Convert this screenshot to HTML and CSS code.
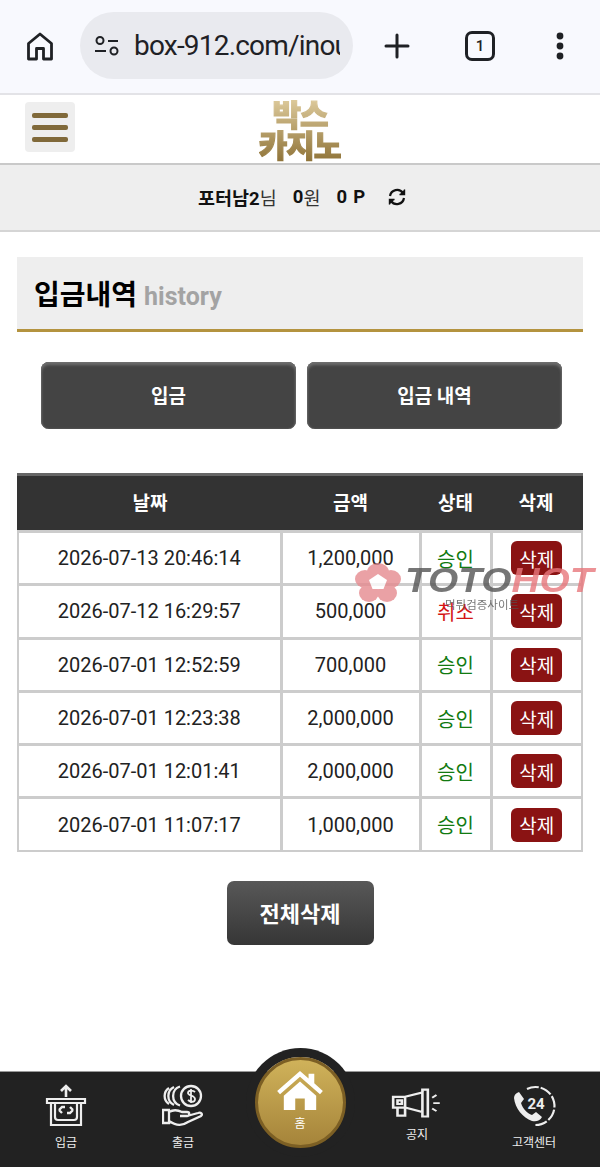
FILE: index.html
```html
<!DOCTYPE html>
<html lang="ko">
<head>
  <meta charset="UTF-8">
  <meta name="viewport" content="width=device-width, initial-scale=1.0">
  <title>입금내역</title>
  <link rel="stylesheet" href="styles.css">
</head>
<body>
  <div class="browser-bar">
    <svg class="home-icon" width="32" height="32" viewBox="0 0 32 32" fill="none" stroke="#1f2125" stroke-width="2.800" stroke-linejoin="round">
      <path d="M4.500 29V13.500L16 4l11.500 9.500V29h-8V18.500h-7V29z"/>
    </svg>
    <div class="url-pill">
      <svg width="26" height="22" viewBox="0 0 26 22" fill="none" stroke="#1f2125" stroke-width="2">
        <circle cx="6" cy="5.500" r="3.500"/><path d="M14 6h10M1 16h11"/><circle cx="20" cy="16" r="3.500"/>
      </svg>
      <span class="url-text">box-912.com/inout</span>
    </div>
    <svg class="plus-icon" width="28" height="28" viewBox="0 0 28 28" stroke="#1f2125" stroke-width="3" stroke-linecap="round"><path d="M14 3v22M3 14h22"/></svg>
    <div class="tab-count">1</div>
    <svg class="more-icon" width="10" height="28" viewBox="0 0 10 28" fill="#1f2125"><circle cx="5" cy="4" r="3.400"/><circle cx="5" cy="14" r="3.400"/><circle cx="5" cy="24" r="3.400"/></svg>
  </div>

  <header class="site-header">
    <button class="menu-btn"><span></span><span></span><span></span></button>
    <div class="logo">박스<br>카지노</div>
  </header>

  <div class="user-bar">
    <b>포터남2</b><span>님</span>
    <b class="gap">0</b><span>원</span>
    <b class="gap points">0 P</b>
    <svg class="refresh" width="20" height="20" viewBox="0 0 20 20" fill="none" stroke="#111" stroke-width="2.200">
      <path d="M3 9A7.200 7.200 0 0 1 16 6M17 11A7.200 7.200 0 0 1 4 14"/>
      <path d="M17.500 2.500v5h-5M2.500 17.500v-5h5" stroke-width="1.400" fill="#111"/>
    </svg>
  </div>

  <main class="content">
    <div class="title-box"><h1>입금내역</h1><span>history</span></div>

    <div class="tabs">
      <a class="tab">입금</a>
      <a class="tab">입금 내역</a>
    </div>

    <table class="history">
      <thead>
        <tr><th>날짜</th><th>금액</th><th>상태</th><th>삭제</th></tr>
      </thead>
      <tbody>
        <tr><td>2026-07-13 20:46:14</td><td>1,200,000</td><td class="ok">승인</td><td><a class="del">삭제</a></td></tr>
        <tr><td>2026-07-12 16:29:57</td><td>500,000</td><td class="no">취소</td><td><a class="del">삭제</a></td></tr>
        <tr><td>2026-07-01 12:52:59</td><td>700,000</td><td class="ok">승인</td><td><a class="del">삭제</a></td></tr>
        <tr><td>2026-07-01 12:23:38</td><td>2,000,000</td><td class="ok">승인</td><td><a class="del">삭제</a></td></tr>
        <tr><td>2026-07-01 12:01:41</td><td>2,000,000</td><td class="ok">승인</td><td><a class="del">삭제</a></td></tr>
        <tr><td>2026-07-01 11:07:17</td><td>1,000,000</td><td class="ok">승인</td><td><a class="del">삭제</a></td></tr>
      </tbody>
    </table>

    <div class="delete-row"><a class="delete-all">전체삭제</a></div>
  </main>

  <!-- watermark sits over the table -->
  <div class="watermark">
    <svg class="wm-icon" width="48" height="40" viewBox="0 0 46 40">
      <g fill="#e58a8f">
        <ellipse cx="23" cy="9" rx="11" ry="9"/><ellipse cx="36" cy="16" rx="10" ry="9"/><ellipse cx="32" cy="30" rx="10" ry="9"/><ellipse cx="14" cy="30" rx="10" ry="9"/><ellipse cx="10" cy="16" rx="10" ry="9"/>
      </g>
      <path d="M23 11l9 6-3.500 9h-11L14 17z" fill="#fff"/>
    </svg>
    <div class="wm-word"><i>TOTO</i><i class="wm-hot">HOT</i></div>
    <div class="wm-sub">먹튀검증사이트</div>
  </div>

  <nav class="bottom-nav">
    <a class="nav-item">
      <svg width="42" height="44" viewBox="0 0 42 44" fill="none" stroke="#eee" stroke-width="2.200">
        <path d="M21 2v11M16 7l5-5 5 5" stroke-width="2.600"/>
        <path d="M2 15h38v4H2zM6 19v22h30V19"/>
        <path d="M10 19v14c0 2 1 3 3 3h16c2 0 3-1 3-3V19"/>
        <path d="M14 26l3-3h3M28 26l-3 3h-3M14 26l3 3M28 26l-3-3" stroke-width="2.400"/>
      </svg>
      <span>입금</span>
    </a>
    <a class="nav-item">
      <svg width="42" height="44" viewBox="0 0 42 44" fill="none" stroke="#eee" stroke-width="2.300">
        <circle cx="29" cy="12" r="10"/>
        <path d="M18 2.500a10 10 0 0 0 0 19M12 3a10 10 0 0 0 0 18M7 4a9.500 9.500 0 0 0 0 16"/>
        <path d="M33 8c-2-2-7-2-7 1s7 2 7 6-5 3-7 1M29 5v14" stroke-width="1.800"/>
        <path d="M1 26h6v13H1zM7 28c5-3 9-2 13 0h5c3 0 3 4 0 4h-7M7 37c8 5 13 5 19 1l13-6c2-2 0-4-3-3l-11 3"/>
      </svg>
      <span>출금</span>
    </a>
    <a class="nav-home">
      <svg width="48" height="40" viewBox="0 0 50 42" fill="#fff">
        <path d="M25 1L1 22l3 3.500L25 7l21 18.500 3-3.500-9-8V4h-6v5z"/>
        <path d="M8 27L25 12l17 15v15H30V30H20v12H8z"/>
      </svg>
      <span>홈</span>
    </a>
    <a class="nav-item nav-up">
      <svg width="52" height="34" viewBox="0 0 48 38" preserveAspectRatio="none" fill="none" stroke="#eee" stroke-width="2.400">
        <path d="M2 11h11v12H2zM13 11l16-5v22l-16-5M29 3h5v30h-5z"/>
        <path d="M6 23v9h7v-9M6 15h4v4H6z"/>
        <path d="M38 12l4-3M39 18h6M38 24l4 3" stroke-width="2"/>
      </svg>
      <span>공지</span>
    </a>
    <a class="nav-item">
      <svg width="46" height="44" viewBox="0 0 46 44" fill="none" stroke="#eee" stroke-width="2.200">
        <path d="M16 5a19 19 0 1 1 8 36" stroke-dasharray="12 2"/>
        <path d="M8 8l5 7-3 4c2 6 6 10 11 12l4-3 6 5c-2 4-6 5-10 4C12 34 4 24 3 14c0-3 2-5 5-6z" fill="#eee" stroke="none"/>
        <text x="25" y="25" class="nav-24">24</text>
      </svg>
      <span>고객센터</span>
    </a>
  </nav>
</body>
</html>
```

FILE: styles.css
```css
* {
  box-sizing: border-box;
}

body {
  margin: 0;
  height: 1167px;
  overflow: hidden;
  position: relative;
  background-color: #fff;
  color: #111;
  font-family: Roboto, "Noto Sans CJK KR", sans-serif;
}

/* browser chrome */
.browser-bar {
  height: 95px;
  display: flex;
  align-items: center;
  background-color: #f8f9fe;
  border-bottom: 2px solid #e3e3e7;
  padding: 0 0 2px 24px;
}

.url-pill {
  width: 273px;
  height: 67px;
  margin-left: 24px;
  padding: 0 13px 0 14px;
  display: flex;
  align-items: center;
  gap: 14px;
  background-color: #e9eaef;
  border-radius: 34px;
  flex-shrink: 0;
}

.url-pill svg {
  flex-shrink: 0;
}

.url-text {
  font-size: 28px;
  letter-spacing: -0.8px;
  color: #1f2125;
  white-space: nowrap;
  overflow: hidden;
}

.plus-icon {
  margin-left: 30px;
}

.tab-count {
  width: 30px;
  height: 30px;
  margin-left: 54px;
  border: 3px solid #1f2125;
  border-radius: 7px;
  font-size: 15px;
  font-weight: 500;
  display: flex;
  justify-content: center;
  align-items: center;
  color: #1f2125;
}

.more-icon {
  margin-left: 60px;
}

/* site header */
.site-header {
  height: 70px;
  position: relative;
  display: flex;
  align-items: center;
  justify-content: center;
  border-bottom: 2px solid #c9c9c9;
  padding-top: 3px;
}

.menu-btn {
  position: absolute;
  left: 25px;
  top: 7px;
  width: 50px;
  height: 50px;
  padding: 0 7px;
  border: none;
  border-radius: 4px;
  background-color: #eee;
  display: flex;
  flex-direction: column;
  justify-content: center;
  gap: 7px;
}

.menu-btn span {
  height: 5px;
  border-radius: 2px;
  background-color: #80693a;
}

.logo {
  font-size: 31px;
  line-height: 31px;
  font-weight: 900;
  letter-spacing: -1px;
  text-align: center;
  background: linear-gradient(#dcc99a, #8f7338);
  -webkit-background-clip: text;
  background-clip: text;
  color: transparent;
  -webkit-text-stroke: 1.200px transparent;
  filter: blur(0.4px);
}

.user-bar {
  height: 67px;
  background-color: #eee;
  border-bottom: 2px solid #d5d5d5;
  display: flex;
  align-items: center;
  justify-content: center;
  font-size: 18.500px;
  padding: 0 0 1px 5px;
}

.user-bar span {
  font-weight: 400;
  color: #333;
}

.user-bar .gap {
  margin-left: 16px;
}

.user-bar .points {
  letter-spacing: 0.8px;
}

.refresh {
  margin-left: 21px;
}

/* content */
.content {
  padding: 25px 17px 0;
}

.title-box {
  height: 75px;
  background-color: #eee;
  border-bottom: 3px solid #b4933f;
  display: flex;
  align-items: center;
  padding-left: 17px;
  gap: 7px;
}

.title-box h1 {
  margin: 0;
  font-size: 28px;
  font-weight: 700;
  color: #000;
}

.title-box span {
  font-size: 25px;
  font-weight: 700;
  color: #a3a3a3;
  margin-top: 6px;
}

.tabs {
  display: flex;
  gap: 11px;
  padding: 30px 21px 0 24px;
}

.tab {
  flex: 1;
  height: 67px;
  padding-bottom: 3px;
  display: flex;
  align-items: center;
  justify-content: center;
  border-radius: 8px;
  background-color: #444;
  box-shadow: inset 0 3px 3px #6e6e6e, inset 1px 0 2px #5c5c5c, inset -1px 0 2px #5c5c5c;
  color: #fff;
  font-size: 19px;
  font-weight: 700;
}

.history {
  width: 100%;
  margin-top: 44px;
  border-collapse: collapse;
  table-layout: fixed;
}

.history th {
  height: 57px;
  padding: 0 0 3px;
  background-color: #333;
  border-top: 3px solid #666;
  border-bottom: 2px solid #111;
  color: #fff;
  font-size: 19px;
  font-weight: 700;
}

.history th:first-child {
  border-left: 2px solid #333;
}

.history th:last-child {
  border-right: 2px solid #333;
}

.history td {
  height: 53.300px;
  padding: 0;
  border: 3px solid #ccc;
  text-align: center;
  font-size: 20px;
  color: #222;
}

.history tr:last-child td {
  border-bottom-width: 2px;
}

.history td:first-child {
  border-left-width: 2px;
}

.history td:last-child {
  border-right-width: 2px;
}

.history th:nth-child(1) { width: 263px; }
.history th:nth-child(2) { width: 139px; }
.history th:nth-child(3) { width: 71px; }

.history td.ok {
  color: #117a11;
}

.history td.no {
  color: #d41515;
}

.del {
  display: inline-flex;
  align-items: center;
  justify-content: center;
  width: 51px;
  height: 34px;
  border-radius: 6px;
  background-color: #8a1313;
  color: #fff;
  font-size: 19px;
  vertical-align: middle;
}

.delete-row {
  display: flex;
  justify-content: center;
  margin-top: 29px;
}

.delete-all {
  width: 147px;
  height: 64px;
  padding-bottom: 3px;
  display: flex;
  align-items: center;
  justify-content: center;
  border-radius: 7px;
  background: linear-gradient(#585858, #363636);
  color: #fff;
  font-size: 22px;
  font-weight: 700;
}

/* watermark */
.watermark {
  position: absolute;
  left: 354px;
  top: 557px;
  width: 246px;
  height: 60px;
  pointer-events: none;
  display: flex;
  gap: 3px;
  opacity: 0.8;
}

.wm-icon {
  margin-top: 6px;
  flex-shrink: 0;
}

.wm-word {
  font-family: "Liberation Sans", sans-serif;
  font-size: 35px;
  font-weight: 700;
  line-height: 46px;
  color: #555;
  white-space: nowrap;
  transform: scaleX(1.11);
  transform-origin: left center;
}

.wm-word i {
  font-style: italic;
}

.wm-word .wm-hot {
  color: #e8777c;
}

.wm-sub {
  position: absolute;
  left: 91px;
  top: 39px;
  font-size: 11.500px;
  color: #555;
  white-space: nowrap;
}

/* bottom nav */
.bottom-nav {
  position: absolute;
  left: 0;
  bottom: 0;
  width: 100%;
  height: 96px;
  background-color: #222;
  border-top: 1px solid #999;
  display: grid;
  grid-template-columns: repeat(5, 117px);
  justify-content: center;
}

.nav-item {
  display: flex;
  flex-direction: column;
  align-items: center;
  padding-top: 12px;
  gap: 5px;
  color: #eee;
  font-size: 12px;
  white-space: nowrap;
}

.nav-up {
  gap: 4px;
  padding-top: 15px;
}

.nav-24 {
  font-family: Roboto, sans-serif;
  font-size: 15px;
  font-weight: 700;
  fill: #eee;
  stroke: none;
  text-anchor: middle;
}

.nav-home {
  justify-self: center;
  width: 91px;
  height: 91px;
  margin-top: -15px;
  border-radius: 50%;
  background: linear-gradient(#d0b25a, #a5843a);
  border: 3px solid #7c5f24;
  box-shadow: 0 0 0 9px #222;
  display: flex;
  flex-direction: column;
  align-items: center;
  padding-top: 10px;
  gap: 4px;
  color: #fff;
  font-size: 12px;
  position: relative;
}
```
